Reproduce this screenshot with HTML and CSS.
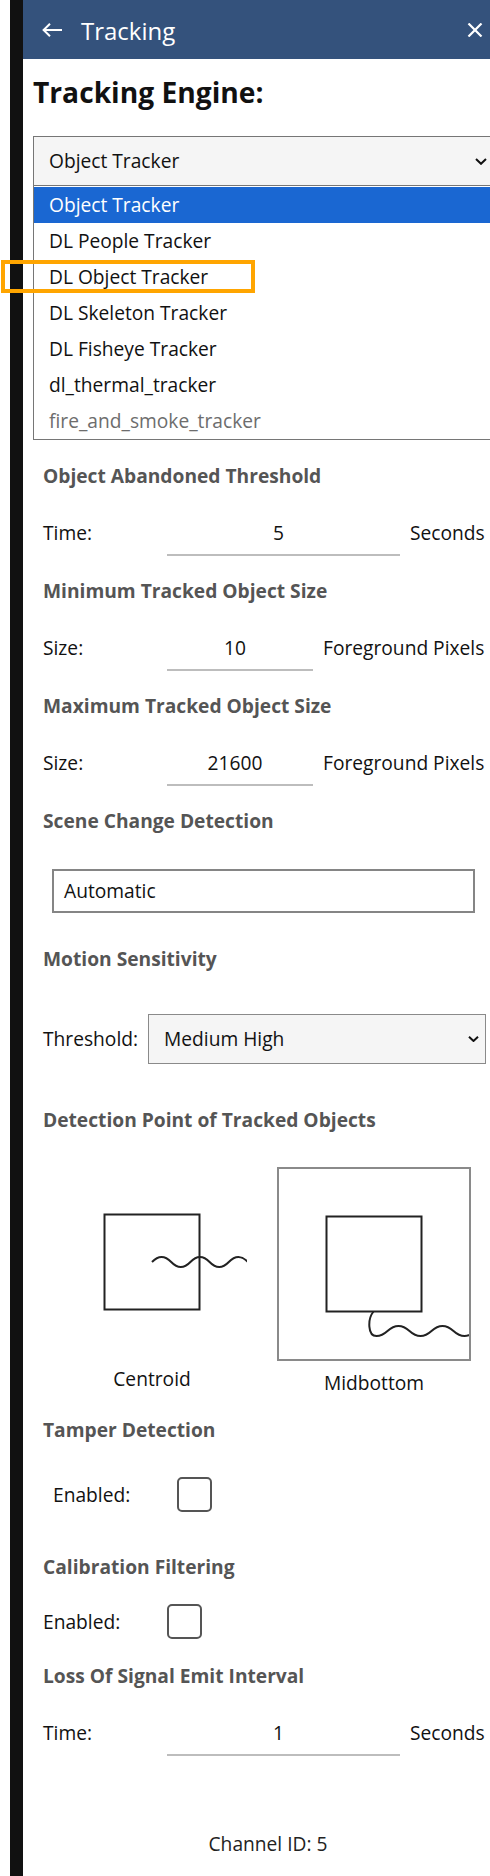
FILE: index.html
```html
<!DOCTYPE html>
<html lang="en">
<head>
<meta charset="utf-8">
<title>Tracking</title>
<link rel="stylesheet" href="styles.css">
</head>
<body>
<div class="frame">
  <div class="gutter"></div>
  <div class="rail"></div>
  <main class="panel">
    <header class="topbar">
      <svg class="back" viewBox="0 0 20 14" aria-hidden="true"><path d="M20 7H1.5M8 0.8L1.6 7L8 13.2" fill="none" stroke="#fff" stroke-width="2"/></svg>
      <h1 class="title">Tracking</h1>
      <svg class="close" viewBox="0 0 16 14" aria-hidden="true"><path d="M1.5 0.5L14.5 13.5M14.5 0.5L1.5 13.5" fill="none" stroke="#fff" stroke-width="2.2"/></svg>
    </header>

    <div class="content">
      <h2 class="engine-title">Tracking Engine:</h2>
      <div class="engine-select">
        <span>Object Tracker</span>
        <svg class="chev" viewBox="0 0 12 7" aria-hidden="true"><path d="M1 1L6 5.8L11 1" fill="none" stroke="#111" stroke-width="2"/></svg>
      </div>
      <ul class="engine-list">
        <li class="engine-opt is-active">Object Tracker</li>
        <li class="engine-opt">DL People Tracker</li>
        <li class="engine-opt">DL Object Tracker</li>
        <li class="engine-opt">DL Skeleton Tracker</li>
        <li class="engine-opt">DL Fisheye Tracker</li>
        <li class="engine-opt">dl_thermal_tracker</li>
        <li class="engine-opt is-disabled">fire_and_smoke_tracker</li>
      </ul>

      <div class="groups">
        <section class="group g-first">
          <h3 class="group-title">Object Abandoned Threshold</h3>
          <div class="row row-field">
            <span class="lbl">Time:</span>
            <div class="field field-wide">5</div>
            <span class="unit">Seconds</span>
          </div>
        </section>

        <section class="group g-field">
          <h3 class="group-title">Minimum Tracked Object Size</h3>
          <div class="row row-field">
            <span class="lbl">Size:</span>
            <div class="field field-narrow">10</div>
            <span class="unit">Foreground Pixels</span>
          </div>
        </section>

        <section class="group g-field">
          <h3 class="group-title">Maximum Tracked Object Size</h3>
          <div class="row row-field">
            <span class="lbl">Size:</span>
            <div class="field field-narrow">21600</div>
            <span class="unit">Foreground Pixels</span>
          </div>
        </section>

        <section class="group g-field">
          <h3 class="group-title">Scene Change Detection</h3>
          <div class="scene-box">Automatic</div>
        </section>

        <section class="group g-motion">
          <h3 class="group-title">Motion Sensitivity</h3>
          <div class="row row-threshold">
            <span class="lbl-auto">Threshold:</span>
            <div class="thr-select">
              <span>Medium High</span>
              <svg class="chev-sm" viewBox="0 0 11 6" aria-hidden="true"><path d="M1 0.8L5.5 5L10 0.8" fill="none" stroke="#111" stroke-width="2"/></svg>
            </div>
          </div>
        </section>

        <section class="group g-detect">
          <h3 class="group-title">Detection Point of Tracked Objects</h3>
          <div class="detect-options">
            <div class="detect-item">
              <div class="detect-box">
                <svg viewBox="0 0 190 190" class="detect-svg" aria-hidden="true">
                  <rect x="47.5" y="47.5" width="95" height="95" fill="none" stroke="#222" stroke-width="2"/>
                  <path d="M95 95 q9.6 -10 19.2 0 t19.2 0 t19.2 0 t19.2 0 t19.2 0" fill="none" stroke="#222" stroke-width="2"/>
                </svg>
              </div>
              <span class="detect-label">Centroid</span>
            </div>
            <div class="detect-item">
              <div class="detect-box is-selected">
                <svg viewBox="0 0 190 190" class="detect-svg" aria-hidden="true">
                  <rect x="47.5" y="47.5" width="95" height="95" fill="none" stroke="#222" stroke-width="2"/>
                  <path d="M94.5 142.5C88.5 150 88.5 167 97.5 167C108.5 167 108.5 157 119.5 157S130.5 167 141.5 167S152.5 157 163.5 157S174.5 167 185.5 167S196.5 157 207.5 157" fill="none" stroke="#222" stroke-width="2"/>
                </svg>
              </div>
              <span class="detect-label">Midbottom</span>
            </div>
          </div>
        </section>

        <section class="group g-tamper">
          <h3 class="group-title">Tamper Detection</h3>
          <div class="row row-check row-indent">
            <span class="lbl">Enabled:</span>
            <span class="check"></span>
          </div>
        </section>

        <section class="group g-calib">
          <h3 class="group-title">Calibration Filtering</h3>
          <div class="row row-check row-check-tight">
            <span class="lbl">Enabled:</span>
            <span class="check"></span>
          </div>
        </section>

        <section class="group g-loss">
          <h3 class="group-title">Loss Of Signal Emit Interval</h3>
          <div class="row row-field">
            <span class="lbl">Time:</span>
            <div class="field field-wide">1</div>
            <span class="unit">Seconds</span>
          </div>
        </section>
      </div>

      <p class="channel">Channel ID: 5</p>
    </div>
  </main>
  <div class="callout"></div>
</div>
</body>
</html>
```

FILE: styles.css
```css
* {
  box-sizing: border-box;
  margin: 0;
  padding: 0;
}

html, body {
  margin: 0;
  background: #fff;
}

body {
  font-family: "Open Sans", "Noto Sans", sans-serif;
  font-size: 19.2px;
  line-height: 24px;
  color: #111;
}

.frame {
  position: relative;
  display: flex;
  width: 490px;
  height: 1876px;
  overflow: hidden;
}

.gutter {
  flex: none;
  width: 10px;
  background: #fff;
}

.rail {
  flex: none;
  width: 13px;
  background: #111;
}

.panel {
  flex: none;
  width: 480px;
  display: flex;
  flex-direction: column;
}

/* header */
.topbar {
  flex: none;
  height: 59px;
  background: #34527c;
  display: flex;
  align-items: center;
  padding: 0 20px 0 19px;
  color: #fff;
}

.back {
  width: 20px;
  height: 14px;
  flex: none;
}

.title {
  font-size: 24px;
  font-weight: 400;
  line-height: 32px;
  margin: 2px 0 0 19px;
}

.close {
  flex: none;
  width: 16px;
  height: 14px;
  margin-left: auto;
}

/* content */
.content {
  padding-left: 10px;
}

.engine-title {
  font-size: 28.2px;
  font-weight: 700;
  line-height: 40px;
  margin-top: 13px;
  color: #111;
}

.engine-select {
  margin-top: 24px;
  width: 467px;
  height: 50px;
  background: #f5f5f5;
  border: 1px solid #767676;
  display: flex;
  align-items: center;
  padding: 0 12px 0 15px;
}

.chev {
  width: 12px;
  height: 7px;
  margin-left: auto;
}

.engine-list {
  list-style: none;
  width: 467px;
  border-left: 1px solid #767676;
  border-bottom: 1px solid #767676;
  padding-top: 1px;
}

.engine-opt {
  height: 36px;
  line-height: 36px;
  padding-left: 15px;
  color: #111;
}

.engine-opt.is-active {
  background: #1a67d2;
  color: #fff;
}

.engine-opt.is-disabled {
  color: #6d6d6d;
}

/* groups */
.groups {
  padding-left: 10px;
  display: flex;
  flex-direction: column;
}

.group-title {
  font-size: 19.2px;
  font-weight: 700;
  line-height: 24px;
  color: #555;
}

.g-first { margin-top: 24px; }
.g-field { margin-top: 23px; }
.g-motion { margin-top: 34px; }
.g-detect { margin-top: 44px; }
.g-tamper { margin-top: 23px; }
.g-calib { margin-top: 43px; }
.g-loss { margin-top: 25px; }

.row {
  display: flex;
}

.row-field {
  margin-top: 33px;
  align-items: flex-start;
}

.lbl {
  flex: none;
  width: 124px;
}

.lbl-auto {
  flex: none;
  margin-right: 10px;
}

.field {
  flex: none;
  text-align: center;
  padding: 0 10px 9px 0;
  border-bottom: 2px solid #bdbdbd;
}

.field-wide { width: 233px; }
.field-narrow { width: 146px; }

.unit {
  margin-left: 10px;
  white-space: nowrap;
}

.scene-box {
  margin: 36px 0 0 9px;
  width: 423px;
  height: 44px;
  border: 2px solid #858585;
  padding: 8px 10px;
}

.row-threshold {
  margin-top: 43px;
  align-items: center;
}

.thr-select {
  width: 338px;
  height: 50px;
  background: #f5f5f5;
  border: 1px solid #8a8a8a;
  display: flex;
  align-items: center;
  padding: 0 6px 0 15px;
}

.chev-sm {
  width: 11px;
  height: 6px;
  margin-left: auto;
}

/* detection point */
.detect-options {
  margin-top: 35px;
  padding-left: 14px;
  display: flex;
  align-items: flex-start;
  gap: 30px;
}

.detect-item {
  display: flex;
  flex-direction: column;
  align-items: center;
}

.detect-box {
  width: 190px;
  height: 190px;
}

.detect-box.is-selected {
  width: 194px;
  height: 194px;
  border: 2px solid #8a8a8a;
}

.detect-svg {
  display: block;
  width: 190px;
  height: 190px;
  overflow: hidden;
}

.detect-label {
  margin-top: 10px;
}

/* checkboxes */
.row-check {
  align-items: center;
  margin-top: 35px;
}

.row-check-tight {
  margin-top: 25px;
}

.row-indent {
  padding-left: 10px;
}

.check {
  flex: none;
  width: 35px;
  height: 35px;
  border: 2px solid #555;
  border-radius: 5px;
  background: #fff;
}

.channel {
  margin-top: 76px;
  text-align: center;
  color: #222;
}

/* annotation overlay */
.callout {
  position: absolute;
  left: 1px;
  top: 260px;
  width: 254px;
  height: 33px;
  border: 4px solid #ffa500;
  pointer-events: none;
}
```
